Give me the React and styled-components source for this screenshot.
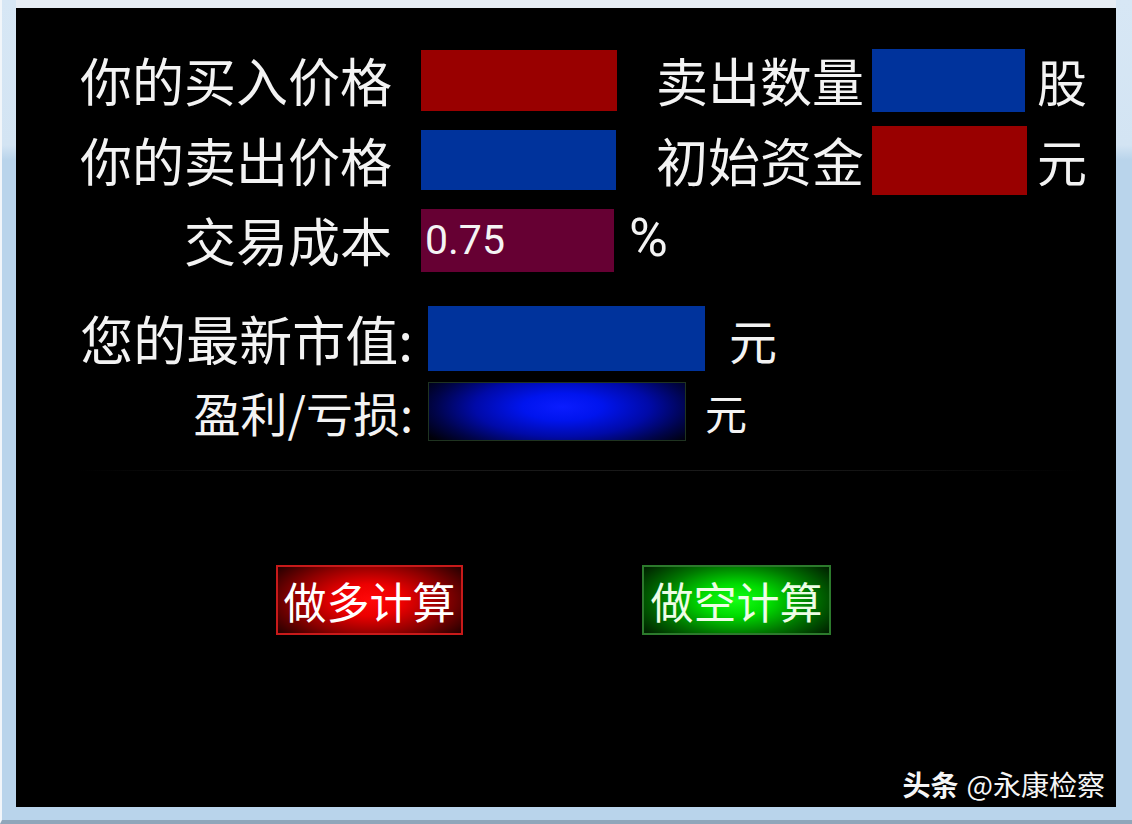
import React from 'react';
import styled, { createGlobalStyle } from 'styled-components';

const GlobalStyle = createGlobalStyle`
  html, body {
    margin: 0;
    padding: 0;
    background: #b9d4eb;
  }
  * { box-sizing: border-box; }
`;

const Frame = styled.div`
  width: 1132px;
  height: 824px;
  display: flex;
  flex-direction: column;
  padding: 0 16px 13px 16px;
  border-left: 2px solid #f2f6fa;
  border-bottom: 4px solid #8fa6ba;
  background: linear-gradient(to bottom, #d7e7f5 0, #d3e4f3 145px, #b9d4eb 160px, #b9d4eb 100%);
`;

const Panel = styled.div`
  position: relative;
  flex: 1;
  margin-left: -2px;
  background: #000;
  border-top: 8px solid #e7edf4;
  font-family: "Noto Sans CJK SC", "Noto Sans", sans-serif;
  color: #f3f3f3;
`;

const FormGrid = styled.div`
  display: grid;
  grid-template-columns: 405px 196px 255px 155px auto;
  grid-auto-rows: 80px;
  align-items: center;
  margin-top: 32px;
`;

const Label = styled.div`
  font-size: ${(p) => p.$size || 52}px;
  line-height: 1;
  white-space: nowrap;
  text-align: ${(p) => p.$align || 'right'};
  padding-right: ${(p) => p.$pr || 0}px;
  padding-left: ${(p) => p.$pl || 0}px;
`;

const Field = styled.div`
  width: ${(p) => p.$w}px;
  height: ${(p) => p.$h}px;
  background: ${(p) => p.$bg};
  display: flex;
  align-items: center;
  padding-left: 4px;
`;

const Value = styled.span`
  font-family: Roboto, "Liberation Sans", sans-serif;
  font-size: 41px;
  color: #f4f4f4;
`;

const Percent = styled.div`
  font-family: Roboto, "Liberation Sans", sans-serif;
  font-size: 53px;
  line-height: 1;
  padding-left: 12px;
  margin-top: -4px;
`;

const Results = styled.div`
  display: flex;
  flex-direction: column;
  gap: 11px;
  margin-top: 26px;
`;

const ResultRow = styled.div`
  display: flex;
  align-items: center;
`;

const ResultLabel = styled(Label)`
  width: 412px;
  padding-right: 15px;
`;

const GlowBox = styled.div`
  width: ${(p) => p.$w}px;
  height: ${(p) => p.$h}px;
  border: 1px solid #1f3320;
  background: radial-gradient(ellipse 62% 95% at 52% 42%, #0a1cff 0%, #0014ee 25%, #000aa8 55%, #00044a 80%, #000008 100%);
`;

const Unit = styled.div`
  font-size: ${(p) => p.$size || 50}px;
  line-height: 1;
  margin-left: ${(p) => p.$ml || 0}px;
`;

const Divider = styled.div`
  height: 1px;
  margin: 29px 30px 0 60px;
  background: linear-gradient(to right, transparent, #161616 20%, #1a1a1a 70%, transparent);
`;

const ButtonRow = styled.div`
  display: flex;
  align-items: center;
  gap: 179px;
  padding-left: 260px;
  margin-top: 94px;
`;

const tones = {
  red: {
    border: '#c81a1a',
    bg: 'radial-gradient(ellipse 62% 80% at 50% 50%, #ff0808 0%, #ec0000 30%, #900000 65%, #2a0000 100%)',
    color: '#ffffff',
  },
  green: {
    border: '#2c7a2c',
    bg: 'radial-gradient(ellipse 62% 80% at 50% 50%, #14ff14 0%, #00dc00 30%, #007800 65%, #002200 100%)',
    color: '#eefde6',
  },
};

const CalcButton = styled.button`
  width: ${(p) => p.$w}px;
  height: 70px;
  border: 2px solid ${(p) => tones[p.$tone].border};
  background: ${(p) => tones[p.$tone].bg};
  color: ${(p) => tones[p.$tone].color};
  font-family: "Noto Sans CJK SC", "Noto Sans", sans-serif;
  font-size: 43px;
  line-height: 1;
  padding: 0;
  cursor: pointer;
  display: flex;
  align-items: center;
  justify-content: center;
`;

const Watermark = styled.div`
  position: absolute;
  right: 11px;
  bottom: 3px;
  font-size: 28px;
  color: #f5f5f5;
  white-space: nowrap;
  b { font-weight: 700; margin-right: 8px; }
`;

function App() {
  return (
    <>
      <GlobalStyle />
      <Frame>
        <Panel>
          <FormGrid>
            <Label $pr={29}>你的买入价格</Label>
            <Field $w={196} $h={61} $bg="#990000" />
            <Label $pr={8}>卖出数量</Label>
            <Field $w={153} $h={63} $bg="#00339c" />
            <Unit $ml={10}>股</Unit>

            <Label $pr={29}>你的卖出价格</Label>
            <Field $w={195} $h={60} $bg="#00339c" />
            <Label $pr={8}>初始资金</Label>
            <Field $w={155} $h={69} $bg="#990000" />
            <Unit $ml={10}>元</Unit>

            <Label $pr={29}>交易成本</Label>
            <Field $w={193} $h={63} $bg="#660033">
              <Value>0.75</Value>
            </Field>
            <Percent>%</Percent>
          </FormGrid>

          <Results>
            <ResultRow>
              <ResultLabel $size={53}>您的最新市值:</ResultLabel>
              <Field $w={277} $h={65} $bg="#00339c" />
              <Unit $ml={24} $size={48}>元</Unit>
            </ResultRow>
            <ResultRow>
              <ResultLabel $size={47}>盈利/亏损:</ResultLabel>
              <GlowBox $w={258} $h={59} />
              <Unit $ml={19} $size={42}>元</Unit>
            </ResultRow>
          </Results>

          <Divider />

          <ButtonRow>
            <CalcButton $tone="red" $w={187}>做多计算</CalcButton>
            <CalcButton $tone="green" $w={189}>做空计算</CalcButton>
          </ButtonRow>

          <Watermark><b>头条</b>@永康检察</Watermark>
        </Panel>
      </Frame>
    </>
  );
}

export default App;
